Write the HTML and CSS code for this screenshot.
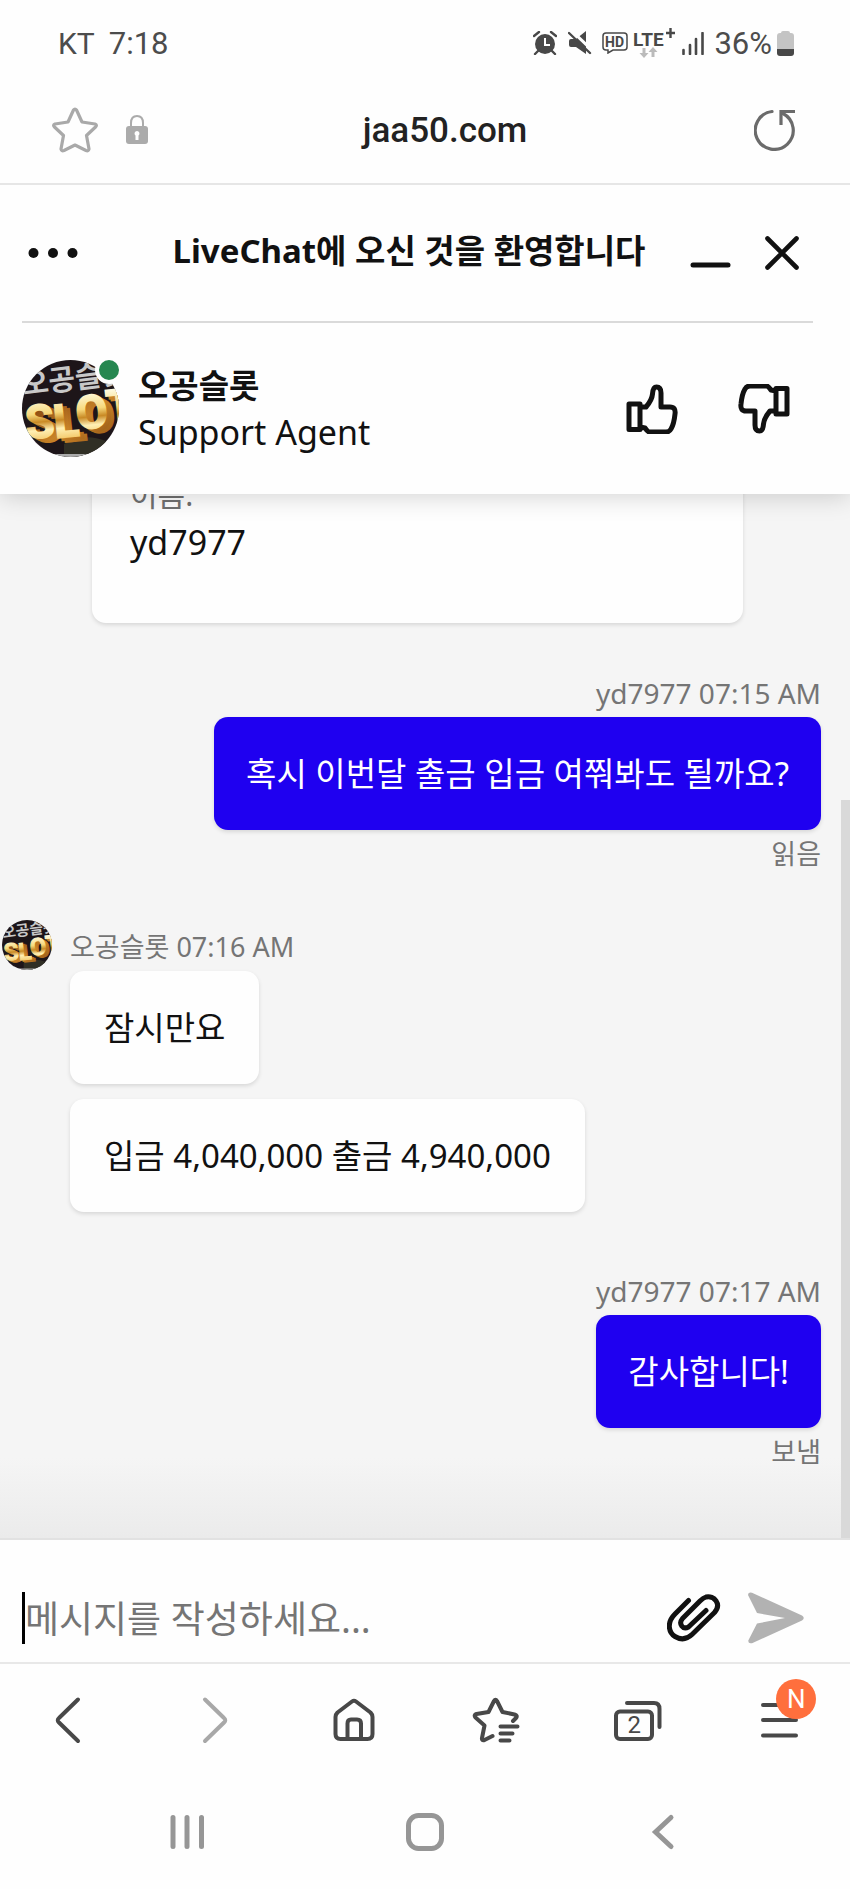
FILE: index.html
```html
<!DOCTYPE html>
<html lang="ko">
<head>
<meta charset="utf-8">
<meta name="viewport" content="width=device-width, initial-scale=1">
<title>LiveChat</title>
<link rel="stylesheet" href="styles.css">
</head>
<body>
<svg class="defs" aria-hidden="true">
  <defs>
    <linearGradient id="gold" x1="0" y1="0" x2="0" y2="1">
      <stop offset="0.15" stop-color="#fffbe0"/><stop offset="0.42" stop-color="#f7d97c"/>
      <stop offset="0.55" stop-color="#c98a25"/><stop offset="0.68" stop-color="#fff0b4"/><stop offset="1" stop-color="#e9a92f"/>
    </linearGradient>
    <linearGradient id="bronze" x1="0" y1="0" x2="1" y2="1">
      <stop offset="0" stop-color="#6a2c06"/><stop offset="0.5" stop-color="#c98428"/><stop offset="1" stop-color="#6e3507"/>
    </linearGradient>
    <clipPath id="disc"><circle cx="48.5" cy="48.5" r="48.5"/></clipPath>
    <symbol id="avatar" viewBox="0 0 97 97">
      <g clip-path="url(#disc)">
        <rect width="97" height="97" fill="#1d1519"/>
        <path d="M0 70l30 27H0z" fill="#3a1330"/>
        <path d="M42 84q20-12 42-3v16H42z" fill="#302f25"/>
        <path d="M10 94h80v3H10z" fill="#aaa"/>
        <text class="logo-ko" transform="rotate(-7)" x="-3" y="35">오공슬롯</text>
        <g class="logo-side" transform="rotate(-6)">
          <text x="4 32 55 84" y="84 86 80 77">SLOT</text>
          <text x="1 29 52 82" y="82 84 78 75">SLOT</text>
        </g>
        <text class="logo-face" transform="rotate(-6)" x="-3 25 48 79" y="79 81 75 72">SLOT</text>
      </g>
    </symbol>
  </defs>
</svg>
<div class="screen">
  <header class="status-bar">
    <div class="status-left"><span class="carrier">KT</span><span>7:18</span></div>
    <div class="status-right">
      <svg width="24" height="24" viewBox="0 0 24 24" fill="#484848"><circle cx="12" cy="13" r="10"/><path d="M1 5l5-4M18 1l5 4M5 20l-3 3M19 20l3 3" stroke="#484848" stroke-width="2.4" stroke-linecap="round"/><path d="M12 7v7h5" fill="none" stroke="#fff" stroke-width="2"/></svg>
      <svg class="mute" width="24" height="24" viewBox="0 0 24 24"><path d="M3 8h5l10-8v23l-10-7H3q-2 0-2-2v-4q0-2 2-2z" fill="#484848"/><path d="M4 0l22 21" stroke="#fefefe" stroke-width="3"/><path d="M1 2l21 20" stroke="#484848" stroke-width="2.4" stroke-linecap="round"/></svg>
      <svg class="hd" width="26" height="22" viewBox="0 0 26 22"><path d="M4 1h18q3 0 3 3v11q0 3-3 3H11l-5 3v-3H4q-3 0-3-3V4q0-3 3-3z" fill="none" stroke="#484848" stroke-width="1.5"/><text x="3" y="15">HD</text></svg>
      <svg class="lte" width="43" height="30" viewBox="0 0 43 30"><text x="0" y="18">LTE</text><path d="M33 5h9M37.500 0v10" stroke="#484848" stroke-width="2.400"/><path d="M9.500 20h3v5h3l-4.500 5-4.500-5h3zM18.500 29h3v-5h3l-4.500-5-4.500 5h3z" fill="#bbb"/></svg>
      <svg class="signal" width="22" height="23" viewBox="0 0 22 23"><path d="M1.500 18v4M8 13v9M14 7v15M20.500 1v21" stroke="#484848" stroke-width="2.600" stroke-linecap="round"/></svg>
      <span>36%</span>
      <svg width="17" height="25" viewBox="0 0 17 25"><path d="M4 2q0-2 2-2h5q2 0 2 2h1q3 0 3 3v13H0V5q0-3 3-3z" fill="#c4c4c4"/><path d="M0 18h17v4q0 3-3 3H3q-3 0-3-3z" fill="#484848"/></svg>
    </div>
  </header>

  <div class="url-bar">
    <div class="url-left">
      <button aria-label="북마크"><svg width="46" height="46" viewBox="0 0 46 46" fill="none" stroke="#a9a9a9" stroke-width="3.200" stroke-linejoin="round"><path d="M21.500 3Q23 1 24.500 3L30 15L43 17Q45.500 18 43.500 20L34.500 28.500L37 42Q36.500 44.500 34 43.500L23 38L12 43.500Q9.500 44.500 9 42L11.500 28.500L2.500 20Q.5 18 3 17L16 15z"/></svg></button>
      <svg width="22" height="29" viewBox="0 0 22 29"><path d="M5 13V8q0-7 6-7t6 7v5" fill="none" stroke="#ababab" stroke-width="2"/><rect y="11" width="22" height="18" rx="3" fill="#ababab"/><path d="M11 16a2.500 2.500 0 0 1 1.500 4.500V25h-3v-4.500A2.500 2.500 0 0 1 11 16" fill="#fff"/></svg>
    </div>
    <a class="address" href="#">jaa50.com</a>
    <button class="reload" aria-label="새로고침"><svg width="42" height="42" viewBox="0 0 42 42" fill="none" stroke="#6b6b6b" stroke-width="3.200"><path d="M18 2.500A19 19 0 1 0 29 4.500" stroke-linecap="round"/><path d="M27 16V2.500h14"/></svg></button>
  </div>

  <div class="chat-header">
    <button class="more" aria-label="메뉴"><svg width="50" height="12" viewBox="0 0 50 12" fill="#111"><circle cx="5.500" cy="6" r="5"/><circle cx="25" cy="6" r="5"/><circle cx="44.500" cy="6" r="5"/></svg></button>
    <h1>LiveChat에 오신 것을 환영합니다</h1>
    <div class="window-actions">
      <button aria-label="최소화"><svg width="41" height="36" viewBox="0 0 41 36"><path d="M3 30h35" stroke="#111" stroke-width="5" stroke-linecap="round"/></svg></button>
      <button aria-label="닫기"><svg width="34" height="36" viewBox="0 0 34 36"><path d="M2.500 3.500l29 29M31.500 3.500l-29 29" stroke="#111" stroke-width="4.600" stroke-linecap="round"/></svg></button>
    </div>
  </div>

  <section class="agent-bar">
    <div class="agent-photo">
      <svg width="97" height="97" role="img" aria-label="오공슬롯"><use href="#avatar"/></svg>
      <span class="online"></span>
    </div>
    <div class="agent-text"><strong>오공슬롯</strong><span>Support Agent</span></div>
    <div class="rating">
      <button aria-label="좋아요"><svg width="52" height="50" viewBox="0 0 52 50"><path id="thumb" d="M3 20h11v25.500H3zM14 23h6q6-7 6.500-13 .5-7 4-7 4.500 0 4.500 6v14h9q6 0 5 7-1 10-4 15-1.500 3-5 3H23q-1.500-.5-4-4l-5-1" fill="none" stroke="#111" stroke-width="5" stroke-linejoin="round"/></svg></button>
      <button aria-label="싫어요"><svg width="52" height="50" viewBox="0 0 52 50"><use href="#thumb" transform="rotate(180 26 25)"/></svg></button>
    </div>
  </section>

  <main class="chat">
    <div class="form-card"><span class="form-label">이름:</span><span class="form-value">yd7977</span></div>
    <article class="group own">
      <div class="meta">yd7977 07:15 AM</div>
      <p class="bubble">혹시 이번달 출금 입금 여쭤봐도 될까요?</p>
      <div class="meta korean">읽음</div>
    </article>
    <article class="group agent">
      <svg class="mini" width="50" height="50" aria-hidden="true"><use href="#avatar"/></svg>
      <div class="stack">
        <div class="meta korean">오공슬롯 07:16 AM</div>
        <p class="bubble">잠시만요</p>
        <p class="bubble">입금 4,040,000 출금 4,940,000</p>
      </div>
    </article>
    <article class="group own">
      <div class="meta">yd7977 07:17 AM</div>
      <p class="bubble">감사합니다!</p>
      <div class="meta korean">보냄</div>
    </article>
    <span class="scrollbar"></span>
  </main>

  <form class="composer">
    <span class="caret"></span>
    <input type="text" aria-label="메시지" placeholder="메시지를 작성하세요...">
    <button type="button" aria-label="파일 첨부"><svg width="54" height="48" viewBox="0 0 54 48"><path d="M21.500 6.500L8 20C-1 29 2 39 8 42.500Q17 48 25 40.500L47.500 18.500C55 10 47 1 39 3Q36 4 33 7L15.500 24.500C11 30 16 36 21.500 33L39 16.500" fill="none" stroke="#111" stroke-width="5" stroke-linecap="round" stroke-linejoin="round"/></svg></button>
    <button type="submit" aria-label="보내기"><svg width="56" height="52" viewBox="0 0 56 52"><path d="M0 3Q0-.5 4 .8L54 23.500Q57.500 26 54 28.500L4 51.200Q0 52 .3 48.500L9 31.500L37 26L9 21z" fill="#b2b2b2"/></svg></button>
  </form>

  <nav class="browser-nav">
    <button aria-label="뒤로"><svg width="52" height="48" viewBox="0 0 52 48"><path d="M33 3.500L14 22Q11.500 24 14 26.500L33 45"/></svg></button>
    <button class="disabled" aria-label="앞으로"><svg width="52" height="48" viewBox="0 0 52 48"><path d="M19 3.500L38 22Q40.500 24 38 26.500L19 45"/></svg></button>
    <button aria-label="홈"><svg width="52" height="48" viewBox="0 0 52 48"><path d="M24 5.500Q26 4 28 5.500L42.500 16.500Q44.500 18.500 44.500 21V38Q44.500 43 39.500 43H12.500Q7.500 43 7.500 38V21Q7.500 18.500 9.500 16.500zM19.500 43V27.500Q19.500 23.500 23 23.500h6Q33 23.500 33 27.500V43"/></svg></button>
    <button aria-label="즐겨찾기"><svg width="52" height="48" viewBox="0 0 52 48"><path d="M22.500 40L14.500 44Q11.500 45 12 42L14.500 29.500L5.500 21.500Q3.500 19 6.500 18L18.500 16L24 5Q25.500 2.500 27 5L32.500 16L44.500 18.500Q48 19.500 46 22L43 25M30.500 30.500H47.500M30.500 37.500H42.500M30.500 44.500H39.500"/></svg></button>
    <button aria-label="탭"><svg width="52" height="48" viewBox="0 0 52 48"><rect x="5" y="15.500" width="36" height="27.500" rx="4"/><path d="M16 7H43Q48.500 7 48.500 13V31"/><text x="16.500" y="37">2</text></svg></button>
    <button aria-label="메뉴"><svg width="52" height="48" viewBox="0 0 52 48"><path d="M10 9H43M10 24H43M10 39.500H43"/></svg><span class="badge">N</span></button>
  </nav>
  <nav class="system-nav">
    <button aria-label="최근 앱"><svg width="36" height="38" viewBox="0 0 36 38"><path d="M4 4.500V33.500M18 4.500V33.500M32.500 4.500V33.500"/></svg></button>
    <button aria-label="홈 화면"><svg width="38" height="38" viewBox="0 0 38 38"><rect x="2.500" y="2.500" width="33" height="33" rx="10"/></svg></button>
    <button aria-label="이전"><svg width="36" height="38" viewBox="0 0 36 38"><path d="M26 4.500L10.500 19L26 33.500"/></svg></button>
  </nav>
</div>
</body>
</html>
```

FILE: styles.css
```css
* { box-sizing: border-box; }

body {
  margin: 0;
  font-family: "Noto Sans", "Noto Sans CJK KR", sans-serif;
  color: #111;
  background: #fefefe;
}

button {
  padding: 0;
  border: 0;
  background: none;
  display: flex;
  align-items: center;
  justify-content: center;
}

svg { display: block; flex: none; }

.defs { position: absolute; width: 0; height: 0; }

.screen {
  height: 100vh;
  display: flex;
  flex-direction: column;
}

.screen > * { flex: none; }

/* Status bar */
.status-bar {
  height: 76px;
  padding: 10px 56px 0 58px;
  display: flex;
  align-items: center;
  justify-content: space-between;
  font-family: Roboto, sans-serif;
  font-size: 31px;
  color: #4c4c4c;
}

.status-left, .status-right { display: flex; align-items: center; }
.status-left { gap: 14px; }
.carrier { font-size: 30px; }
.status-right > span { margin: 0 5px 0 10px; }
.mute { margin: 0 10px 0 11px; }
.hd text { font: 700 14px Roboto, sans-serif; fill: #484848; }
.lte { margin: 0 6px 0 5px; }
.lte text { font: 700 19px Roboto, sans-serif; fill: #484848; }

/* Address bar */
.url-bar {
  height: 109px;
  border-bottom: 2px solid #e6e6e6;
  display: grid;
  grid-template-columns: 200px 1fr 160px;
  align-items: center;
}

.url-left { display: flex; align-items: center; gap: 28px; padding-left: 52px; }

.address {
  padding-top: 2px;
  font: 500 35px Roboto, sans-serif;
  color: #222;
  text-align: center;
  text-decoration: none;
}

.reload { justify-content: flex-end; padding-right: 54px; }

/* Chat header */
.chat-header {
  position: relative;
  z-index: 2;
  height: 136px;
  display: grid;
  grid-template-columns: 130px 1fr 162px;
  align-items: center;
  background: #fefefe;
}

.more { justify-content: flex-start; padding-left: 28px; }

h1 {
  margin: 0;
  padding-bottom: 5px;
  font-size: 33px;
  line-height: 45px;
  text-align: center;
  white-space: nowrap;
}

.window-actions { display: flex; gap: 34px; padding-left: 2px; }

/* Agent */
.agent-bar {
  position: relative;
  z-index: 1;
  height: 173px;
  padding: 2px 60px 0 22px;
  display: flex;
  align-items: center;
  background: #fefefe;
  box-shadow: 0 2px 24px rgba(0, 0, 0, 0.18);
}

.agent-bar::before {
  content: "";
  position: absolute;
  top: 0;
  left: 22px;
  right: 37px;
  height: 2px;
  background: #dadada;
}

.agent-photo { position: relative; }

.online {
  position: absolute;
  top: -4px;
  right: -4px;
  width: 28px;
  height: 28px;
  border: 4px solid #fefefe;
  border-radius: 50%;
  background: #268750;
}

.agent-text {
  flex: 1;
  margin-left: 19px;
  display: flex;
  flex-direction: column;
  font-size: 34px;
  line-height: 46px;
}

.agent-text strong { font-size: 33px; }
.rating { display: flex; gap: 60px; }

.logo-ko { font: 700 29px "Noto Sans CJK KR", sans-serif; fill: #c8c8c8; }
.logo-face, .logo-side { font: 700 46px "Liberation Sans Narrow", "Roboto", sans-serif; stroke-width: 2px; }
.logo-face { fill: url(#gold); stroke: url(#gold); }
.logo-side { fill: url(#bronze); stroke: url(#bronze); }

/* Conversation */
.screen > .chat {
  position: relative;
  flex: 1;
  min-height: 0;
  overflow: hidden;
  padding: 0 29px 68px 0;
  display: flex;
  flex-direction: column;
  justify-content: flex-end;
  gap: 52px;
  background: linear-gradient(to top, #ebebeb, #f5f5f5 80px);
}

.form-card {
  margin: 0 78px 0 92px;
  padding: 40px 38px 58px;
  display: flex;
  flex-direction: column;
  gap: 7px;
  border-radius: 14px;
  background: #fefefe;
  box-shadow: 0 2px 4px rgba(0, 0, 0, 0.12);
}

.form-label { font-size: 30px; line-height: 36px; color: #707070; }
.form-value { font-size: 34px; line-height: 45px; }

.group { display: flex; }
.own { flex-direction: column; align-items: flex-end; gap: 6px; }
.agent { padding: 5px 0 9px 2px; gap: 18px; }
.mini { margin-top: -9px; }
.stack { display: flex; flex-direction: column; align-items: flex-start; gap: 15px; }
.stack .meta { margin-bottom: -9px; }

.meta { font-size: 28px; line-height: 36px; color: #757575; }
.korean { font-size: 27px; }

.bubble {
  margin: 0;
  padding: 34px;
  border-radius: 14px;
  font-size: 33px;
  line-height: 45px;
  background: #fefefe;
  box-shadow: 0 2px 4px rgba(0, 0, 0, 0.12);
}

.own .bubble { padding: 34px 32px; background: #1f00f0; color: #fff; }

.scrollbar {
  position: absolute;
  right: 0;
  bottom: 0;
  width: 9px;
  height: 738px;
  background: #d9d9d9;
}

/* Composer */
.composer {
  border-top: 2px solid #e2e2e2;
  border-bottom: 2px solid #e8e8e8;
  padding: 52px 46px 18px 22px;
  display: flex;
  align-items: center;
}

.caret { width: 3px; height: 52px; background: #000; }

.composer input {
  flex: 1;
  min-width: 0;
  height: 52px;
  padding: 0;
  border: 0;
  outline: 0;
  background: none;
  font: 37px "Noto Sans", "Noto Sans CJK KR", sans-serif;
}

.composer input::placeholder { color: #757575; opacity: 1; }
.composer button + button { margin-left: 27px; }

/* Browser toolbar */
.browser-nav {
  height: 111px;
  display: grid;
  grid-template-columns: repeat(6, 1fr);
  justify-items: center;
}

.browser-nav button { position: relative; }

.browser-nav svg {
  fill: none;
  stroke: #484848;
  stroke-width: 4px;
  stroke-linecap: round;
  stroke-linejoin: round;
}

.browser-nav .disabled svg { stroke: #a8a8a8; }
.browser-nav text { font: 24px Roboto, sans-serif; fill: #484848; stroke: none; }

.badge {
  position: absolute;
  top: 15px;
  right: -11px;
  width: 40px;
  height: 40px;
  border-radius: 50%;
  background: #ff6f3d;
  color: #fff;
  font: 26px/40px Roboto, sans-serif;
  text-align: center;
}

/* System navigation */
.system-nav {
  height: 114px;
  padding: 0 68px;
  display: grid;
  grid-template-columns: repeat(3, 1fr);
  justify-items: center;
}

.system-nav svg {
  fill: none;
  stroke: #969696;
  stroke-width: 5px;
  stroke-linecap: round;
}
```
